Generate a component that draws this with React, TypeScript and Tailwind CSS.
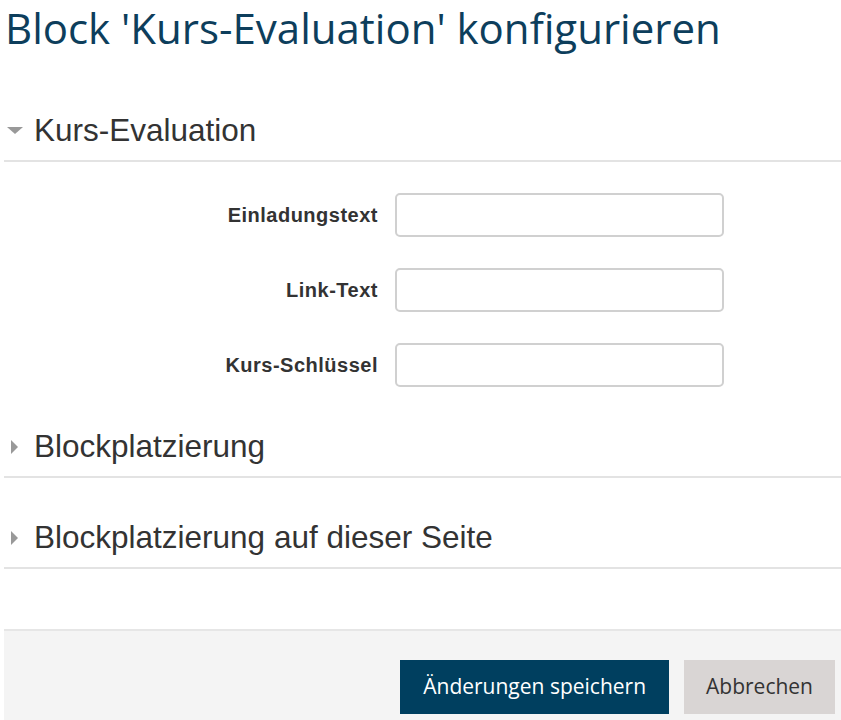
import React from "react";

const sans = { fontFamily: '"Liberation Sans", Arial, sans-serif' };
const open = { fontFamily: '"Open Sans", "Liberation Sans", sans-serif' };

function DownTri() {
  return (
    <svg width="16" height="8" viewBox="0 0 16 8" className="block">
      <polygon points="0,0 16,0 8,7" fill="#999999" />
    </svg>
  );
}
function RightTri() {
  return (
    <svg width="8" height="16" viewBox="0 0 8 16" className="block">
      <polygon points="0,1 7,8 0,15" fill="#999999" />
    </svg>
  );
}

function Header({ title, open: isOpen }: { title: string; open?: boolean }) {
  return (
    <div className="flex items-center border-b-2 border-[#e3e3e3] pb-[12px]" style={sans}>
      <div className="w-[30px] flex justify-start">
        {isOpen ? (
          <div className="ml-[3px] mt-[2px]"><DownTri /></div>
        ) : (
          <div className="ml-[7px] mt-[1px]"><RightTri /></div>
        )}
      </div>
      <div className="text-[31.5px] leading-[36px] text-[#333333]">{title}</div>
    </div>
  );
}

function Row({ label }: { label: string }) {
  return (
    <div className="flex items-center">
      <div className="w-[374px] text-right text-[20px] tracking-[0.5px] font-bold text-[#333333]" style={sans}>
        {label}
      </div>
      <input
        type="text"
        className="ml-[17px] w-[329px] h-[44px] border-2 border-[#d0d0d0] rounded-[5px] bg-white outline-none"
      />
    </div>
  );
}

export default function App() {
  return (
    <div className="bg-white w-[841px] h-[720px] overflow-hidden flex flex-col">
      <h1
        className="pl-[5px] pt-[3px] text-[42px] leading-[50px] text-[#0d3e5c] font-normal"
        style={open}
      >
        Block 'Kurs-Evaluation' konfigurieren
      </h1>
      <div className="pl-[4px] mt-[59px]">
        <Header title="Kurs-Evaluation" open />
        <div className="mt-[31px] flex flex-col gap-[31px]">
          <Row label="Einladungstext" />
          <Row label="Link-Text" />
          <Row label="Kurs-Schlüssel" />
        </div>
        <div className="mt-[41px]">
          <Header title="Blockplatzierung" />
        </div>
        <div className="mt-[41px]">
          <Header title="Blockplatzierung auf dieser Seite" />
        </div>
      </div>
      <div className="mt-[60px] ml-[4px] flex-1 bg-[#f4f4f4] border-t-2 border-[#e6e6e6] flex justify-end items-start pt-[29px] pr-[6px] gap-[15px]" style={open}>
        <button className="h-[54px] px-[23px] bg-[#003f5f] text-white text-[21px]">
          Änderungen speichern
        </button>
        <button className="h-[54px] px-[22px] bg-[#d9d5d4] text-[#333333] text-[21px]">
          Abbrechen
        </button>
      </div>
    </div>
  );
}
